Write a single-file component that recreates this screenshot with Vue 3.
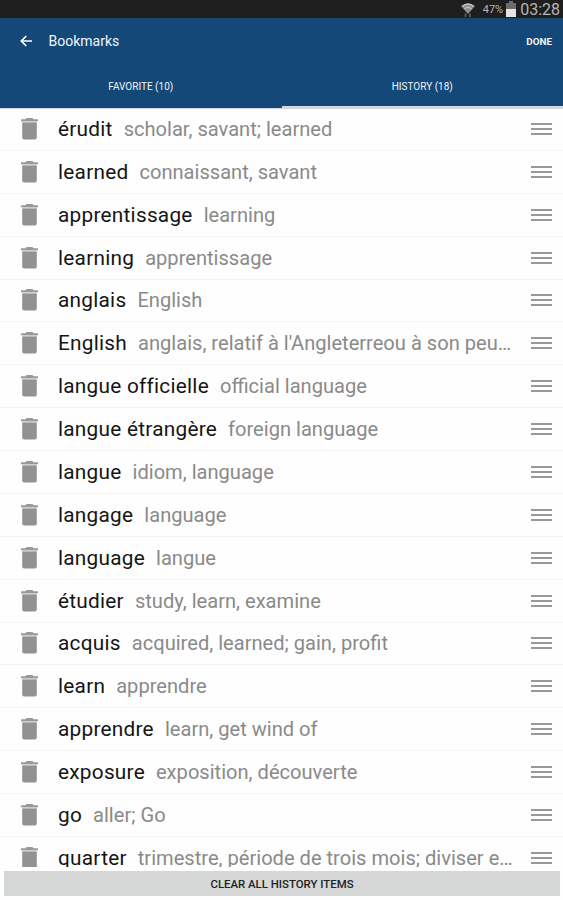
<script setup>
import { computed, ref } from 'vue'

const tab = ref('history')
const favoriteCount = ref(10)

const items = ref([
  { word: 'érudit', meaning: 'scholar, savant; learned' },
  { word: 'learned', meaning: 'connaissant, savant' },
  { word: 'apprentissage', meaning: 'learning' },
  { word: 'learning', meaning: 'apprentissage' },
  { word: 'anglais', meaning: 'English' },
  { word: 'English', meaning: "anglais, relatif à l'Angleterreou à son peu…" },
  { word: 'langue officielle', meaning: 'official language' },
  { word: 'langue étrangère', meaning: 'foreign language' },
  { word: 'langue', meaning: 'idiom, language' },
  { word: 'langage', meaning: 'language' },
  { word: 'language', meaning: 'langue' },
  { word: 'étudier', meaning: 'study, learn, examine' },
  { word: 'acquis', meaning: 'acquired, learned; gain, profit' },
  { word: 'learn', meaning: 'apprendre' },
  { word: 'apprendre', meaning: 'learn, get wind of' },
  { word: 'exposure', meaning: 'exposition, découverte' },
  { word: 'go', meaning: 'aller; Go' },
  { word: 'quarter', meaning: 'trimestre, période de trois mois; diviser e…' }
])

const historyCount = computed(() => items.value.length)

function removeItem(index) {
  items.value.splice(index, 1)
}

function clearAll() {
  items.value = []
}
</script>

<template>
  <div class="screen">
    <div class="status-bar">
      <svg class="wifi" width="14" height="15" viewBox="0 0 14 15">
        <path d="M0 4 Q7 -1.5 14 4 L7 12 Z" fill="#8f8f8f" />
        <path d="M1.5 4.2 Q7 0 12.5 4.2M3.5 6.8 Q7 4 10.5 6.8" fill="none" stroke="#c4c4c4" stroke-width="1.2" />
        <path d="M4.5 11.5v3.5M9 11.5v3.5" stroke="#666" stroke-width="1.5" />
      </svg>
      <span class="percent">47%</span>
      <svg class="battery" width="10" height="16" viewBox="0 0 10 16">
        <path d="M3 0h4v2h3v7H0V2h3z" fill="#6c6c6c" />
        <path d="M0 8h10v8H0z" fill="#e4e4e4" />
      </svg>
      <span class="clock">03:28</span>
    </div>

    <div class="header">
      <div class="toolbar">
        <svg class="back" width="12" height="12" viewBox="0 0 12 12">
          <path d="M12 6H1.5M6.3 1L1.3 6l5 5" fill="none" stroke="#fff" stroke-width="1.7" />
        </svg>
        <span class="title">Bookmarks</span>
        <span class="done">DONE</span>
      </div>
      <div class="tabs">
        <div class="tab" :class="{ active: tab === 'favorite' }" @click="tab = 'favorite'">
          FAVORITE ({{ favoriteCount }})
        </div>
        <div class="tab" :class="{ active: tab === 'history' }" @click="tab = 'history'">
          HISTORY ({{ historyCount }})
        </div>
      </div>
    </div>

    <div class="list">
      <div v-for="(item, index) in items" :key="item.word" class="row">
        <svg class="trash" width="17" height="22" viewBox="0 0 17 22" @click="removeItem(index)">
          <path d="M5.5 0h6l1 1.2H17v2H0v-2h4.5z" fill="#999" />
          <path d="M1.2 3.2h14.6v1.4H1.2z" fill="#c9c9c9" />
          <path d="M1.2 4.6h14.6V19.4q0 2-2 2H3.2q-2 0-2-2z" fill="#929292" />
        </svg>
        <p class="text">
          <span class="word">{{ item.word }}</span>
          <span class="meaning">{{ item.meaning }}</span>
        </p>
        <div class="handle">
          <i></i>
          <i></i>
          <i></i>
        </div>
      </div>
    </div>

    <div class="footer">
      <button class="clear" @click="clearAll">CLEAR ALL HISTORY ITEMS</button>
    </div>
  </div>
</template>

<style>
body {
  margin: 0;
  background: #fff;
}
</style>

<style scoped>
.screen {
  display: flex;
  flex-direction: column;
  width: 563px;
  height: 900px;
  overflow: hidden;
  background: #fefefe;
  font-family: Roboto, "Liberation Sans", sans-serif;
}
.status-bar {
  display: flex;
  flex: none;
  align-items: center;
  justify-content: flex-end;
  box-sizing: border-box;
  height: 18px;
  padding-right: 3px;
  background: #1e1e1e;
  color: #b5b5b5;
}
.wifi {
  margin-right: 8px;
}
.percent {
  margin-right: 3px;
  padding-top: 1px;
  font-size: 11px;
  line-height: 18px;
}
.battery {
  margin-right: 4px;
}
.clock {
  padding-top: 2px;
  font-size: 16px;
  line-height: 18px;
}
.header {
  flex: none;
  height: 90px;
  background: #144878;
  color: #f1f5fa;
}
.toolbar {
  display: flex;
  align-items: center;
  height: 46px;
  padding: 0 11px 0 20px;
}
.title {
  margin-left: 16.5px;
  font-size: 14px;
}
.done {
  margin-left: auto;
  font-size: 9.9px;
  font-weight: 700;
}
.tabs {
  display: flex;
  height: 44px;
}
.tab {
  flex: 1;
  box-sizing: border-box;
  padding-top: 2px;
  border-bottom: 2px solid #144878;
  font-size: 10px;
  line-height: 42px;
  text-align: center;
}
.tab.active {
  border-bottom-color: #d5d8df;
}
.list {
  flex: 1;
  min-height: 0;
  overflow: hidden;
  box-shadow: inset 0 2px 1px -1px #cfd4d8;
}
.row {
  display: flex;
  align-items: center;
  box-sizing: border-box;
  height: 42.88px;
  padding: 0 11px 0 21px;
  border-bottom: 1px solid #f4f4f4;
}
.trash {
  flex: none;
  margin-right: 20px;
}
.text {
  flex: none;
  width: 460px;
  margin: 0;
  color: #8a8a8a;
  font-size: 20.1px;
  line-height: 28px;
  white-space: nowrap;
}
.word {
  margin-right: 6.5px;
  color: #151515;
  font-size: 20.8px;
  letter-spacing: 0.25px;
}
.meaning {
  margin-left: 4.5px;
}
.handle {
  display: flex;
  flex-direction: column;
  gap: 3px;
  width: 21px;
  margin-left: auto;
}
.handle i {
  height: 2px;
  background: #999;
}
.footer {
  flex: none;
  box-sizing: border-box;
  height: 33px;
  padding: 4px 3px 0 4px;
}
.clear {
  display: block;
  width: 100%;
  height: 25px;
  padding: 0;
  border: 0;
  background: #d6d8d7;
  color: #222;
  font-family: inherit;
  font-size: 11.4px;
  font-weight: 500;
}
</style>
